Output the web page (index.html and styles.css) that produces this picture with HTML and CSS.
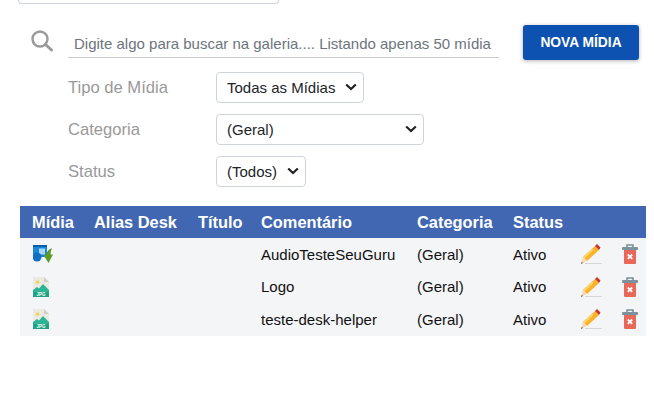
FILE: index.html
```html
<!DOCTYPE html>
<html lang="pt-BR">
<head>
  <meta charset="UTF-8" />
  <title>Galeria de Mídias</title>
  <link rel="stylesheet" href="styles.css">
</head>
<body>
  <div class="top-field"></div>

  <div class="search-row">
    <svg class="search-icon" width="24" height="24" viewBox="0 0 24 24">
      <circle cx="10" cy="9" r="7.500" fill="none" stroke="#9a9a9a" stroke-width="2.400" />
      <path d="M15.500 14.500l6 5.500" fill="none" stroke="#9a9a9a" stroke-width="3" stroke-linecap="round" />
    </svg>
    <input class="search-input" type="text" placeholder="Digite algo para buscar na galeria.... Listando apenas 50 mídia" />
    <button class="new-btn">NOVA MÍDIA</button>
  </div>

  <div class="filters">
    <div class="filter-row">
      <label>Tipo de Mídia</label>
      <select class="sel-tipo"><option>Todas as Mídias</option></select>
    </div>
    <div class="filter-row">
      <label>Categoria</label>
      <select class="sel-categoria"><option>(Geral)</option></select>
    </div>
    <div class="filter-row">
      <label>Status</label>
      <select class="sel-status"><option>(Todos)</option></select>
    </div>
  </div>

  <svg class="defs" width="0" height="0">
    <defs>
      <symbol id="ico-audio" viewBox="0 0 20 18">
        <rect x="0" y="0" width="14" height="12" fill="#1a86dc" />
        <rect x="0" y="0" width="14" height="2" fill="#0b5fa8" />
        <rect x="6" y="3.500" width="6" height="6" fill="#a9d4f2" />
        <circle cx="4" cy="12" r="4.500" fill="#0f6fc4" />
        <path d="M19 3c-1 2.500-1.500 4.500-1.500 6.500H20L15.500 18 10.500 10H13c.5-3 2.500-5.500 6-7z" fill="#5c9c24" />
      </symbol>
      <symbol id="ico-jpg" viewBox="0 0 16 20">
        <path d="M0 0h11l5 5v15H0z" fill="#eceae0" />
        <path d="M11 0l5 5h-5z" fill="#d0cec2" />
        <circle cx="4.500" cy="5" r="1.800" fill="#f5cf5c" />
        <path d="M0 13l4-3 2 1.500L10 7l6 6v7H0z" fill="#2db494" />
        <rect y="15" width="16" height="5" fill="#1fa284" />
        <text class="jpg-label" x="8" y="19.300" text-anchor="middle">JPG</text>
      </symbol>
      <symbol id="ico-edit" viewBox="0 0 22 20">
        <path d="M5 19h17v1H5z" fill="#d5d8d6" />
        <path d="M3 13L15 2l4 4L7 17z" fill="#fbb32a" />
        <path d="M3 13l9-8.500 1.500 1.500L4.500 14.500z" fill="#fdd36b" />
        <path d="M15 2l2-2 3.500 3.500-1.500 2.500z" fill="#c9352b" />
        <path d="M3 13l4 4-6 3z" fill="#f6d9b8" />
        <path d="M1.800 18l-.8 2 2-.9z" fill="#444" />
      </symbol>
      <symbol id="ico-trash" viewBox="0 0 16 20">
        <path d="M5 3V1h6v2" fill="none" stroke="#7a8f97" stroke-width="1.600" />
        <rect y="3" width="16" height="3" rx="1" fill="#7d939b" />
        <path d="M2 6h12v13a1 1 0 0 1-1 1H3a1 1 0 0 1-1-1z" fill="#e8685a" />
        <path d="M5.800 10.500l4.400 4.400m0-4.400l-4.400 4.400" stroke="#fff" stroke-width="1.800" />
      </symbol>
    </defs>
  </svg>

  <table class="media-table">
    <colgroup>
      <col class="c-midia"><col class="c-alias"><col class="c-titulo"><col class="c-coment">
      <col class="c-cat"><col class="c-status"><col class="c-edit"><col class="c-del">
    </colgroup>
    <thead>
      <tr>
        <th>Mídia</th>
        <th>Alias Desk</th>
        <th>Título</th>
        <th>Comentário</th>
        <th>Categoria</th>
        <th>Status</th>
        <th></th>
        <th></th>
      </tr>
    </thead>
    <tbody>
      <tr>
        <td><svg class="ico-file" width="20" height="18"><use href="#ico-audio" /></svg></td>
        <td></td>
        <td></td>
        <td>AudioTesteSeuGuru</td>
        <td>(Geral)</td>
        <td>Ativo</td>
        <td><svg class="ico-edit" width="22" height="20"><use href="#ico-edit" /></svg></td>
        <td><svg class="ico-trash" width="16" height="20"><use href="#ico-trash" /></svg></td>
      </tr>
      <tr>
        <td><svg class="ico-file" width="16" height="20"><use href="#ico-jpg" /></svg></td>
        <td></td>
        <td></td>
        <td>Logo</td>
        <td>(Geral)</td>
        <td>Ativo</td>
        <td><svg class="ico-edit" width="22" height="20"><use href="#ico-edit" /></svg></td>
        <td><svg class="ico-trash" width="16" height="20"><use href="#ico-trash" /></svg></td>
      </tr>
      <tr>
        <td><svg class="ico-file" width="16" height="20"><use href="#ico-jpg" /></svg></td>
        <td></td>
        <td></td>
        <td>teste-desk-helper</td>
        <td>(Geral)</td>
        <td>Ativo</td>
        <td><svg class="ico-edit" width="22" height="20"><use href="#ico-edit" /></svg></td>
        <td><svg class="ico-trash" width="16" height="20"><use href="#ico-trash" /></svg></td>
      </tr>
    </tbody>
  </table>
</body>
</html>
```

FILE: styles.css
```css
html, body {
  overflow: hidden;
}

body {
  margin: 0;
  font-family: "Liberation Sans", Arial, sans-serif;
  color: #212529;
  background-color: #fff;
}

.top-field {
  width: 259px;
  height: 3px;
  margin-left: 18px;
  border: 1px solid #ced4da;
  border-top: none;
  border-radius: 0 0 4px 4px;
}

.search-row {
  display: flex;
  align-items: flex-start;
  margin-top: 21px;
  padding-left: 30px;
}

.search-icon {
  margin-top: 5px;
}

.search-input {
  box-sizing: border-box;
  width: 431px;
  height: 33px;
  margin-left: 14px;
  padding: 4px 6px 0;
  border: none;
  border-bottom: 1px solid #ccc;
  outline: none;
  font-family: inherit;
  font-size: 15px;
  background: transparent;
}

.search-input::placeholder {
  color: #6c757d;
  opacity: 1;
}

.new-btn {
  box-sizing: border-box;
  width: 116px;
  height: 35px;
  margin-left: 24px;
  border: none;
  border-radius: 3px;
  background-color: #0d52b0;
  color: #fff;
  font-family: inherit;
  font-size: 13.800px;
  font-weight: bold;
  box-shadow: 0 1px 4px rgba(0, 0, 0, 0.3);
  cursor: pointer;
}

.filters {
  margin-top: 11px;
  padding-left: 68px;
}

.filter-row {
  display: flex;
  align-items: center;
  height: 32px;
  margin-bottom: 10px;
}

.filter-row label {
  width: 148px;
  padding-top: 1px;
  font-size: 16.600px;
  color: #999;
}

.filter-row select {
  box-sizing: border-box;
  height: 31px;
  padding: 1px 10px 0;
  border: 1px solid #ced4da;
  border-radius: 4px;
  appearance: none;
  background: #fff url("data:image/svg+xml,%3Csvg xmlns='http://www.w3.org/2000/svg' width='12' height='8'%3E%3Cpath d='M1.200 1.500L6 6l4.800-4.500' fill='none' stroke='%23222' stroke-width='2.200'/%3E%3C/svg%3E") no-repeat right 6px center;
  color: #212529;
  font-family: inherit;
  font-size: 15px;
}

.sel-tipo {
  width: 148px;
}

.sel-categoria {
  width: 208px;
}

.sel-status {
  width: 90px;
}

.defs {
  display: block;
}

.media-table {
  table-layout: fixed;
  width: 626px;
  margin: 9px 0 0 20px;
  border-collapse: collapse;
  background-color: #f4f5f7;
  font-size: 15px;
}

.c-midia { width: 62px; }
.c-alias { width: 104px; }
.c-titulo { width: 63px; }
.c-coment { width: 156px; }
.c-cat { width: 96px; }
.c-status { width: 68px; }
.c-edit { width: 41px; }
.c-del { width: 36px; }

.media-table th {
  height: 32px;
  padding: 0 0 0 12px;
  background-color: #4267b2;
  color: #fff;
  font-size: 16.400px;
  font-weight: bold;
  text-align: left;
  white-space: nowrap;
}

.media-table td {
  height: 32.500px;
  padding: 0 0 0 12px;
  color: #111;
  white-space: nowrap;
}

.media-table svg {
  display: block;
}

.ico-file {
  margin-left: 1px;
}

.jpg-label {
  font-family: "Liberation Sans", Arial, sans-serif;
  font-size: 4.500px;
  font-weight: bold;
  fill: #fff;
}

.ico-edit {
  margin-left: -1px;
}
```
